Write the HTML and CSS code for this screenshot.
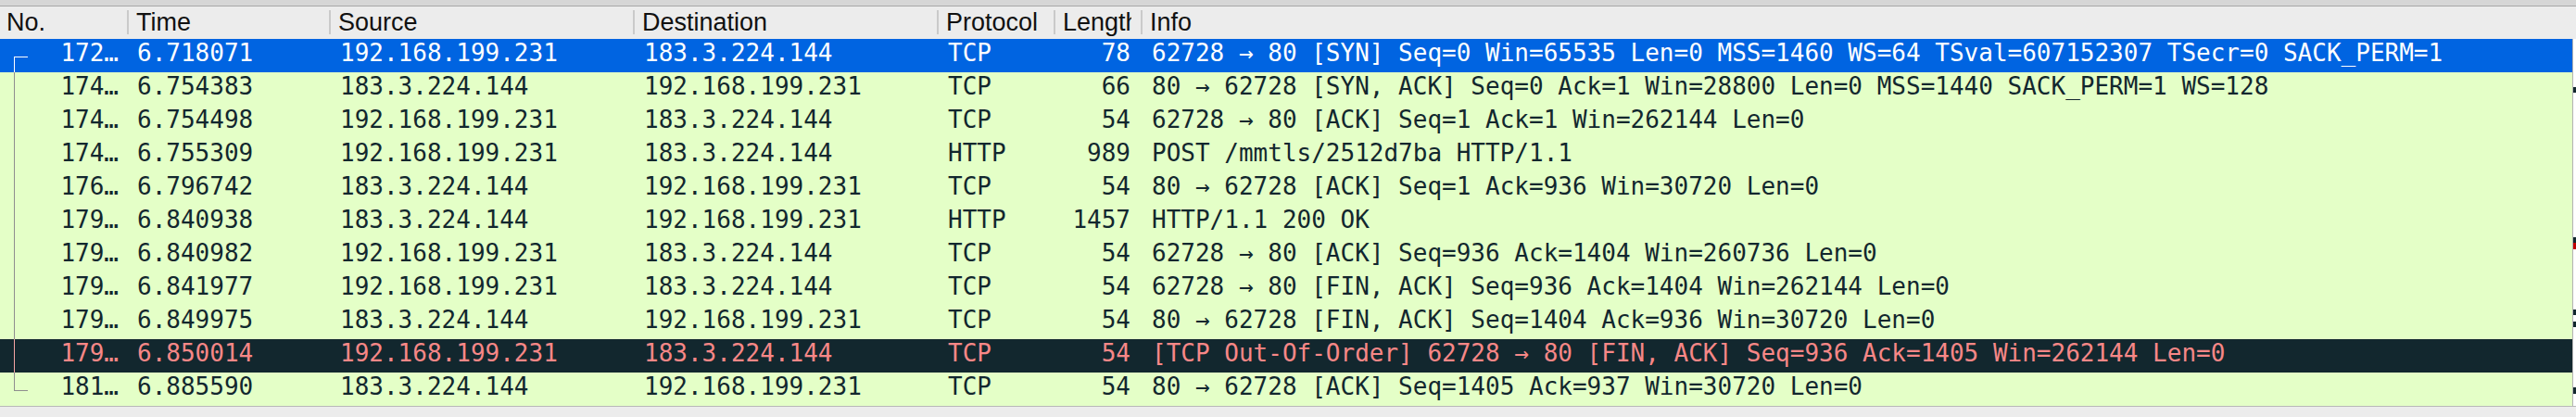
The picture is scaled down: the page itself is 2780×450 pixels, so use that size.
FILE: index.html
```html
<!DOCTYPE html>
<html>
<head>
<meta charset="utf-8">
<link rel="stylesheet" href="styles.css">
</head>
<body>
<div class="window">
  <div class="topstrip"></div>
  <div class="header cols">
    <div class="hcell first"><span class="hlabel">No.</span></div>
    <div class="hcell"><span class="hlabel">Time</span></div>
    <div class="hcell"><span class="hlabel">Source</span></div>
    <div class="hcell"><span class="hlabel">Destination</span></div>
    <div class="hcell"><span class="hlabel">Protocol</span></div>
    <div class="hcell"><span class="hlabel">Length</span></div>
    <div class="hcell"><span class="hlabel">Info</span></div>
  </div>
  <div class="body">
    <div class="rows">
      <div class="row cols selected">
        <div class="cell no tree-first">172…</div><div class="cell time">6.718071</div><div class="cell">192.168.199.231</div><div class="cell">183.3.224.144</div><div class="cell">TCP</div><div class="cell len">78</div><div class="cell info">62728 → 80 [SYN] Seq=0 Win=65535 Len=0 MSS=1460 WS=64 TSval=607152307 TSecr=0 SACK_PERM=1</div>
      </div>
      <div class="row cols http">
        <div class="cell no tree-mid">174…</div><div class="cell time">6.754383</div><div class="cell">183.3.224.144</div><div class="cell">192.168.199.231</div><div class="cell">TCP</div><div class="cell len">66</div><div class="cell info">80 → 62728 [SYN, ACK] Seq=0 Ack=1 Win=28800 Len=0 MSS=1440 SACK_PERM=1 WS=128</div>
      </div>
      <div class="row cols http">
        <div class="cell no tree-mid">174…</div><div class="cell time">6.754498</div><div class="cell">192.168.199.231</div><div class="cell">183.3.224.144</div><div class="cell">TCP</div><div class="cell len">54</div><div class="cell info">62728 → 80 [ACK] Seq=1 Ack=1 Win=262144 Len=0</div>
      </div>
      <div class="row cols http">
        <div class="cell no tree-mid">174…</div><div class="cell time">6.755309</div><div class="cell">192.168.199.231</div><div class="cell">183.3.224.144</div><div class="cell">HTTP</div><div class="cell len">989</div><div class="cell info">POST /mmtls/2512d7ba HTTP/1.1</div>
      </div>
      <div class="row cols http">
        <div class="cell no tree-mid">176…</div><div class="cell time">6.796742</div><div class="cell">183.3.224.144</div><div class="cell">192.168.199.231</div><div class="cell">TCP</div><div class="cell len">54</div><div class="cell info">80 → 62728 [ACK] Seq=1 Ack=936 Win=30720 Len=0</div>
      </div>
      <div class="row cols http">
        <div class="cell no tree-mid">179…</div><div class="cell time">6.840938</div><div class="cell">183.3.224.144</div><div class="cell">192.168.199.231</div><div class="cell">HTTP</div><div class="cell len">1457</div><div class="cell info">HTTP/1.1 200 OK</div>
      </div>
      <div class="row cols http">
        <div class="cell no tree-mid">179…</div><div class="cell time">6.840982</div><div class="cell">192.168.199.231</div><div class="cell">183.3.224.144</div><div class="cell">TCP</div><div class="cell len">54</div><div class="cell info">62728 → 80 [ACK] Seq=936 Ack=1404 Win=260736 Len=0</div>
      </div>
      <div class="row cols http">
        <div class="cell no tree-mid">179…</div><div class="cell time">6.841977</div><div class="cell">192.168.199.231</div><div class="cell">183.3.224.144</div><div class="cell">TCP</div><div class="cell len">54</div><div class="cell info">62728 → 80 [FIN, ACK] Seq=936 Ack=1404 Win=262144 Len=0</div>
      </div>
      <div class="row cols http">
        <div class="cell no tree-mid">179…</div><div class="cell time">6.849975</div><div class="cell">183.3.224.144</div><div class="cell">192.168.199.231</div><div class="cell">TCP</div><div class="cell len">54</div><div class="cell info">80 → 62728 [FIN, ACK] Seq=1404 Ack=936 Win=30720 Len=0</div>
      </div>
      <div class="row cols bad">
        <div class="cell no tree-mid">179…</div><div class="cell time">6.850014</div><div class="cell">192.168.199.231</div><div class="cell">183.3.224.144</div><div class="cell">TCP</div><div class="cell len">54</div><div class="cell info">[TCP Out-Of-Order] 62728 → 80 [FIN, ACK] Seq=936 Ack=1405 Win=262144 Len=0</div>
      </div>
      <div class="row cols http">
        <div class="cell no tree-last">181…</div><div class="cell time">6.885590</div><div class="cell">183.3.224.144</div><div class="cell">192.168.199.231</div><div class="cell">TCP</div><div class="cell len">54</div><div class="cell info">80 → 62728 [ACK] Seq=1405 Ack=937 Win=30720 Len=0</div>
      </div>
    </div>
    <div class="minimap">
      <div class="gap g1"></div><div class="mark dark"></div>
      <div class="gap g2"></div><div class="mark dark"></div><div class="mark red"></div>
      <div class="gap g3"></div><div class="mark dark"></div>
      <div class="gap g4"></div><div class="mark dark"></div>
      <div class="gap g5"></div><div class="mark dark tall"></div>
    </div>
  </div>
  <div class="footer"></div>
</div>
</body>
</html>
```

FILE: styles.css
```css
html, body {
  margin: 0;
  padding: 0;
  background: #ececec;
}
.window {
  width: 2780px;
  height: 450px;
  overflow: hidden;
  display: flex;
  flex-direction: column;
}
.topstrip {
  height: 6px;
  background: #d6d6d6;
  border-bottom: 1px solid #a7a7a7;
  flex: none;
}
.cols {
  display: grid;
  grid-template-columns: 137px 218px 328px 328px 126px 94px 1fr;
}
.header {
  height: 35px;
  background: #ececec;
  font-family: "Liberation Sans", Arial, sans-serif;
  font-size: 27px;
  line-height: 35px;
  color: #111;
  flex: none;
}
.hcell {
  position: relative;
  padding: 0 10px 0 10px;
  white-space: nowrap;
  min-width: 0;
}
.hlabel {
  display: block;
  overflow: hidden;
  white-space: nowrap;
}
.hcell.first {
  padding-left: 7px;
}
.hcell:not(.first)::before {
  content: "";
  position: absolute;
  left: 0;
  top: 4px;
  bottom: 5px;
  width: 2px;
  background: #cacaca;
}
.body {
  display: flex;
  height: 396px;
  flex: none;
}
.rows {
  width: 2776px;
  border-right: 1px solid #b3b3b3;
}
.row {
  height: 36px;
  font-family: "DejaVu Sans Mono", "Liberation Mono", monospace;
  font-size: 26px;
  line-height: 30px;
  white-space: pre;
  --tree: #8e8e8e;
}
.http {
  background: #e4ffc7;
  color: #12272e;
}
.selected {
  background: #0064e1;
  color: #ffffff;
  --tree: #ffffff;
}
.bad {
  background: #12272e;
  color: #f78787;
  --tree: #f5a3a3;
}
.cell {
  padding-left: 12px;
  overflow: hidden;
}
.cell.time {
  padding-left: 11px;
}
.cell.no {
  position: relative;
  text-align: right;
  padding-left: 0;
  padding-right: 9px;
}
.cell.len {
  text-align: right;
  padding-left: 0;
  padding-right: 11px;
}
.tree-first::before,
.tree-mid::before,
.tree-last::before {
  content: "";
  position: absolute;
  left: 15px;
  width: 1px;
  background: var(--tree);
}
.tree-first::before { top: 19px; height: 17px; }
.tree-mid::before { top: 0; height: 36px; }
.tree-last::before { top: 0; height: 20px; }
.tree-first::after,
.tree-last::after {
  content: "";
  position: absolute;
  left: 15px;
  top: 19px;
  width: 15px;
  height: 1px;
  background: var(--tree);
}
.minimap {
  width: 3px;
  background: #ffffff;
  display: flex;
  flex-direction: column;
}
.gap { flex: none; }
.g1 { height: 52px; }
.g2 { height: 156px; }
.g3 { height: 65px; }
.g4 { height: 7px; }
.g5 { height: 65px; }
.mark { height: 6px; flex: none; }
.mark.tall { height: 7px; }
.mark.red { height: 7px; background: #c00000; }
.mark.dark { background: #12272e; }
.footer {
  flex: 1;
  border-top: 1px solid #b8b8b8;
  background: #ececec;
}
```
